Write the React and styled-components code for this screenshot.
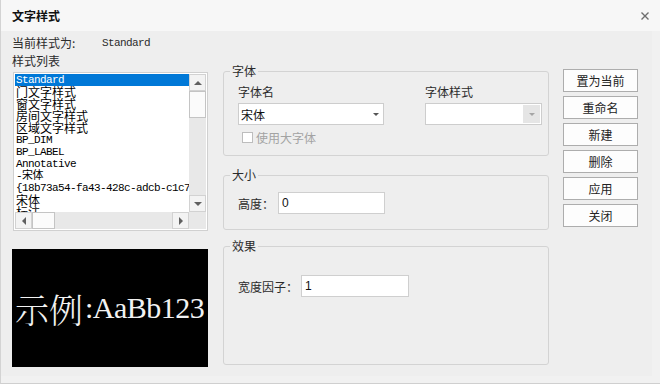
import React from 'react'
import styled, { createGlobalStyle } from 'styled-components'

const GlobalStyle = createGlobalStyle`
  html, body {
    margin: 0;
    padding: 0;
    background: #f1f1f1;
  }
  body {
    font-family: "Noto Sans CJK SC", "Liberation Sans", sans-serif;
    font-size: 12px;
    color: #2b2b2b;
  }
  * {
    box-sizing: border-box;
  }
`

const Window = styled.div`
  width: 660px;
  height: 384px;
  background: #f1f1f1;
  border-left: 1px solid #d3d3d3;
  border-bottom: 1px solid #cfcfcf;
  display: flex;
  flex-direction: column;
  overflow: hidden;
`

const TitleBar = styled.div`
  height: 31px;
  flex: none;
  display: flex;
  align-items: center;
  justify-content: space-between;
  padding: 0 11px;
  background: #f7f7f7;
`

const Title = styled.span`
  font-weight: bold;
  line-height: 14px;
  color: #111;
`

const CloseButton = styled.button`
  border: 0;
  padding: 0;
  background: transparent;
  width: 8px;
  height: 8px;
  display: flex;
`

const Body = styled.div`
  width: 651px;
  height: 345px;
  background: #eeeeee;
  display: flex;
  align-items: flex-start;
  padding-left: 11px;
`

const LeftColumn = styled.div`
  width: 196px;
  padding-top: 5px;
  display: flex;
  flex-direction: column;
`

const InfoRow = styled.div`
  display: flex;
  align-items: center;
  height: 14px;
  line-height: 14px;
`

const InfoLabel = styled.span`
  width: 90px;
`

const Mono = styled.span`
  font-family: "Liberation Mono", "Noto Sans CJK SC", monospace;
  font-size: 11px;
  letter-spacing: -0.6px;
`

const SectionLabel = styled.div`
  margin-top: 4px;
  line-height: 14px;
`

const ListBox = styled.div`
  margin-top: 4px;
  margin-left: 1px;
  width: 195px;
  height: 159px;
  border: 1px solid #d0d0d0;
  background: #fff;
  padding: 1px;
  display: grid;
  grid-template-columns: 1fr 17px;
  grid-template-rows: 1fr 17px;
`

const ListItems = styled.div`
  overflow: hidden;
  min-width: 0;
`

const ListItem = styled.div`
  height: 12px;
  line-height: 12px;
  white-space: nowrap;
  padding-left: 1px;
  color: ${p => (p.$selected ? '#fff' : '#000')};
  background: ${p => (p.$selected ? '#0078d7' : 'transparent')};
  font-family: ${p =>
    p.$latin
      ? '"Liberation Mono", "Noto Sans CJK SC", monospace'
      : '"Noto Sans CJK SC", "Liberation Mono", sans-serif'};
  font-size: ${p => (p.$latin ? '11px' : '12px')};
  letter-spacing: ${p => (p.$latin ? '-0.6px' : '0')};
`

const ScrollBar = styled.div`
  display: flex;
  flex-direction: ${p => (p.$horizontal ? 'row' : 'column')};
  background: #e8e8e8;
`

const ScrollButton = styled.div`
  flex: none;
  width: 17px;
  height: 17px;
  background: #f3f3f3;
  border: 1px solid #d2d2d2;
  display: flex;
  align-items: center;
  justify-content: center;
`

const ScrollThumb = styled.div`
  flex: none;
  background: #fbfbfb;
  border: 1px solid #c4c4c4;
  width: ${p => (p.$horizontal ? '23px' : '17px')};
  height: ${p => (p.$horizontal ? '17px' : '27px')};
`

const ScrollFill = styled.div`
  flex: 1;
`

const Corner = styled.div`
  background: #e8e8e8;
`

const Arrow = styled.span`
  width: 0;
  height: 0;
  border-style: solid;
  border-color: transparent;
  ${p => {
    const c = p.$color || '#606060'
    switch (p.$dir) {
      case 'up':
        return `border-width: 0 4px 4px 4px; border-bottom-color: ${c};`
      case 'down':
        return `border-width: 4px 4px 0 4px; border-top-color: ${c};`
      case 'left':
        return `border-width: 4px 4px 4px 0; border-right-color: ${c};`
      default:
        return `border-width: 4px 0 4px 4px; border-left-color: ${c};`
    }
  }}
`

const SmallArrow = styled.span`
  width: 0;
  height: 0;
  border-style: solid;
  border-color: transparent;
  border-width: 3px 3px 0 3px;
  border-top-color: ${p => p.$color};
`

const Preview = styled.div`
  margin-top: 18px;
  width: 196px;
  height: 118px;
  background: #000;
  color: #f2f2f2;
  display: flex;
  align-items: center;
  padding-left: 3px;
  white-space: nowrap;
  overflow: hidden;
  font-family: "Liberation Serif", "Noto Serif CJK SC", "Noto Sans CJK SC", serif;
`

const PreviewCjk = styled.span`
  font-family: "Noto Serif CJK SC", "Noto Sans CJK SC", serif;
  font-size: 34px;
  font-weight: 300;
`

const PreviewLatin = styled.span`
  font-size: 30px;
  letter-spacing: -0.5px;
  margin-left: 2px;
`

const MiddleColumn = styled.div`
  margin-left: 15px;
  width: 326px;
  padding-top: 33px;
  display: flex;
  flex-direction: column;
`

const Group = styled.fieldset`
  margin: ${p => p.$gap || 0}px 0 0 0;
  padding: 0 6px;
  border: 1px solid #d3d3d3;
  border-radius: 3px;
  min-width: 0;
`

const Legend = styled.legend`
  padding: 0 2px;
  line-height: 14px;
  font-size: 12px;
`

const GroupBody = styled.div`
  padding: ${p => p.$pad};
  height: ${p => (p.$height ? `${p.$height}px` : 'auto')};
`

const FontGrid = styled.div`
  display: grid;
  grid-template-columns: 146px 117px;
  column-gap: 41px;
`

const FieldLabel = styled.div`
  line-height: 14px;
  margin-bottom: 4px;
`

const Select = styled.div`
  height: 22px;
  border: 1px solid #cdcdcd;
  background: #fff;
  display: flex;
  align-items: center;
  padding-left: 2px;
  color: #111;
`

const SelectArrow = styled.div`
  align-self: stretch;
  display: flex;
  align-items: center;
  justify-content: center;
  width: ${p => (p.$disabled ? '17px' : '15px')};
  margin: ${p => (p.$disabled ? '1px 1px 1px auto' : '0 0 0 auto')};
  background: ${p => (p.$disabled ? '#e5e5e5' : 'transparent')};
`

const CheckRow = styled.div`
  margin-top: 5px;
  height: 14px;
  display: flex;
  align-items: center;
  padding-left: 4px;
  color: #a3a3a3;
`

const CheckBox = styled.span`
  width: 11px;
  height: 11px;
  border: 1px solid #bdbdbd;
  background: #fff;
  margin-right: 3px;
`

const FieldRow = styled.div`
  display: flex;
  align-items: center;
`

const RowLabel = styled.span`
  width: ${p => p.$width}px;
  flex: none;
`

const TextInput = styled.input`
  width: ${p => p.$width}px;
  height: 22px;
  border: 1px solid #cfcfcf;
  background: #fff;
  padding: 0 3px;
  margin: 0;
  font-family: "Liberation Sans", "Noto Sans CJK SC", sans-serif;
  font-size: 12px;
  color: #111;
  outline: none;
`

const RightColumn = styled.div`
  margin-left: 14px;
  width: 75px;
  padding-top: 38px;
  display: flex;
  flex-direction: column;
  gap: 4px;
`

const Button = styled.button`
  height: 23px;
  border: 1px solid #adadad;
  background: #fdfdfd;
  padding: 0;
  font-family: "Noto Sans CJK SC", sans-serif;
  font-size: 12px;
  color: #222;
`

const styles = [
  { name: 'Standard', latin: true },
  { name: '门文字样式' },
  { name: '窗文字样式' },
  { name: '房间文字样式' },
  { name: '区域文字样式' },
  { name: 'BP_DIM', latin: true },
  { name: 'BP_LABEL', latin: true },
  { name: 'Annotative', latin: true },
  { name: '-宋体', latin: true },
  { name: '{18b73a54-fa43-428c-adcb-c1c7a2e0}', latin: true },
  { name: '宋体' },
  { name: '标注' },
]

const buttons = ['置为当前', '重命名', '新建', '删除', '应用', '关闭']

const App = () => (
  <>
    <GlobalStyle />
    <Window>
      <TitleBar>
        <Title>文字样式</Title>
        <CloseButton type="button" aria-label="close">
          <svg width="8" height="8" viewBox="0 0 8 8">
            <path d="M0.5 0.5 L7.5 7.5 M7.5 0.5 L0.5 7.5" stroke="#6e6e6e" strokeWidth="1.4" />
          </svg>
        </CloseButton>
      </TitleBar>
      <Body>
        <LeftColumn>
          <InfoRow>
            <InfoLabel>当前样式为:</InfoLabel>
            <Mono>Standard</Mono>
          </InfoRow>
          <SectionLabel>样式列表</SectionLabel>
          <ListBox>
            <ListItems>
              {styles.map((s, i) => (
                <ListItem key={s.name} $latin={s.latin} $selected={i === 0}>
                  {s.name}
                </ListItem>
              ))}
            </ListItems>
            <ScrollBar>
              <ScrollButton>
                <Arrow $dir="up" />
              </ScrollButton>
              <ScrollThumb />
              <ScrollFill />
              <ScrollButton>
                <Arrow $dir="down" />
              </ScrollButton>
            </ScrollBar>
            <ScrollBar $horizontal>
              <ScrollButton>
                <Arrow $dir="left" />
              </ScrollButton>
              <ScrollThumb $horizontal />
              <ScrollFill />
              <ScrollButton>
                <Arrow $dir="right" />
              </ScrollButton>
            </ScrollBar>
            <Corner />
          </ListBox>
          <Preview>
            <PreviewCjk>示例</PreviewCjk>
            <PreviewLatin>:AaBb123</PreviewLatin>
          </Preview>
        </LeftColumn>

        <MiddleColumn>
          <Group>
            <Legend>字体</Legend>
            <GroupBody $pad="7px 0 11px 8px">
              <FontGrid>
                <div>
                  <FieldLabel>字体名</FieldLabel>
                  <Select>
                    宋体
                    <SelectArrow>
                      <SmallArrow $color="#555" />
                    </SelectArrow>
                  </Select>
                </div>
                <div>
                  <FieldLabel>字体样式</FieldLabel>
                  <Select>
                    <SelectArrow $disabled>
                      <SmallArrow $color="#a5a5a5" />
                    </SelectArrow>
                  </Select>
                </div>
              </FontGrid>
              <CheckRow>
                <CheckBox />
                使用大字体
              </CheckRow>
            </GroupBody>
          </Group>

          <Group $gap={12}>
            <Legend>大小</Legend>
            <GroupBody $pad="10px 0 15px 8px">
              <FieldRow>
                <RowLabel $width={40}>高度：</RowLabel>
                <TextInput $width={107} readOnly defaultValue="0" />
              </FieldRow>
            </GroupBody>
          </Group>

          <Group $gap={9}>
            <Legend>效果</Legend>
            <GroupBody $pad="22px 0 0 8px" $height={111}>
              <FieldRow>
                <RowLabel $width={63}>宽度因子：</RowLabel>
                <TextInput $width={108} readOnly defaultValue="1" />
              </FieldRow>
            </GroupBody>
          </Group>
        </MiddleColumn>

        <RightColumn>
          {buttons.map(b => (
            <Button key={b} type="button">
              {b}
            </Button>
          ))}
        </RightColumn>
      </Body>
    </Window>
  </>
)

export default App
